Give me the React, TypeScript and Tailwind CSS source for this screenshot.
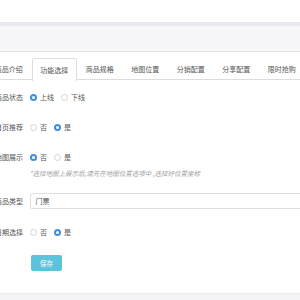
import React from "react";

const font = "font-['Noto_Sans_CJK_SC','Noto_Sans',sans-serif]";

function Radio({ checked }: { checked: boolean }) {
  return checked ? (
    <span className="flex h-[7px] w-[7px] shrink-0 items-center justify-center rounded-full bg-[#3f8fe0]">
      <span className="h-[3px] w-[3px] rounded-full bg-white" />
    </span>
  ) : (
    <span className="h-[7px] w-[7px] shrink-0 rounded-full border border-[#d4d4d4] bg-white" />
  );
}

function RadioGroup({ options, value }: { options: string[]; value: number }) {
  return (
    <div className="flex items-center">
      {options.map((o, i) => (
        <div key={o} className="mr-[6.5px] flex items-center">
          <Radio checked={i === value} />
          <span className="ml-[3.5px] text-[7px] leading-none text-[#555]">{o}</span>
        </div>
      ))}
    </div>
  );
}

function Row({ label, children, className }: { label: string; children: React.ReactNode; className?: string }) {
  return (
    <div className={"flex items-center " + (className ?? "")}>
      <div className="w-[40px] shrink-0 text-right text-[7px] leading-none text-[#555]">{label}</div>
      <div className="ml-[6.5px] flex-1">{children}</div>
    </div>
  );
}

export default function App() {
  const tabs = ["商品介绍", "功能选择", "商品规格", "地图位置", "分销配置", "分享配置", "限时抢购"];
  return (
    <div className={"relative h-[300px] w-[300px] overflow-hidden bg-white " + font}>
      <div className="h-[22px] bg-white" />
      <div className="h-[4px] bg-[#e9e9ef]" />
      <div className="h-[26px] border-b border-[#e3e3e6] bg-[#f7f7f9]" />
      <div className="h-[6px]" />
      <div className="ml-[-14px] flex h-[22px] w-[330px] border-b border-[#dddddd]">
        {tabs.map((t, i) => (
          <div
            key={t}
            className={
              "flex h-[22px] w-[45.5px] shrink-0 items-center justify-center text-[7px] leading-none text-[#555] " +
              (i === 1 ? "mb-[-1px] h-[23px] rounded-t-[2px] border border-b-0 border-[#dddddd] bg-white" : "")
            }
          >
            {t}
          </div>
        ))}
      </div>
      <div className="ml-[-17px] flex flex-col">
        <Row label="商品状态" className="mt-[10px] h-[14px]">
          <RadioGroup options={["上线", "下线"]} value={0} />
        </Row>
        <Row label="首页推荐" className="mt-[16px] h-[14px]">
          <RadioGroup options={["否", "是"]} value={1} />
        </Row>
        <Row label="地图展示" className="mt-[16px] h-[14px]">
          <RadioGroup options={["否", "是"]} value={0} />
        </Row>
        <div className="ml-[46.5px] mt-[4px] flex h-[10px] items-center text-[6.5px] italic leading-none text-[#a0a0a0]">
          *选择地图上展示后,请先在地图位置选项中 ,选择好位置坐标
        </div>
        <Row label="商品类型" className="mt-[15px] h-[16px]">
          <div className="flex h-[16px] w-[300px] items-center rounded-[2px] border border-[#e0e0e0] bg-white pl-[5px] text-[7px] leading-none text-[#555]">
            门票
          </div>
        </Row>
        <Row label="日期选择" className="mt-[16px] h-[14px]">
          <RadioGroup options={["否", "是"]} value={1} />
        </Row>
        <div className="ml-[48px] mt-[16px] flex h-[16px] w-[31px] items-center justify-center rounded-[2px] bg-[#5bc4dc] text-[6.5px] leading-none text-white">
          保存
        </div>
      </div>
      <div className="absolute bottom-0 left-0 h-[7px] w-[300px] border-t border-[#ececef] bg-[#f3f3f5]" />
    </div>
  );
}
